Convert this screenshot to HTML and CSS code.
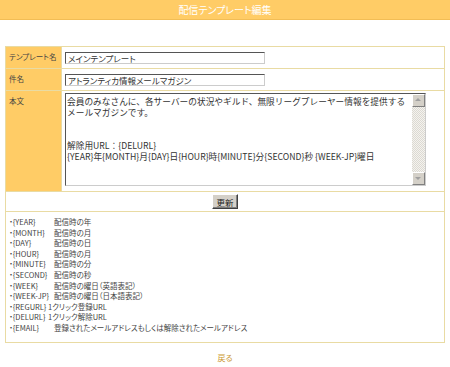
FILE: index.html
```html
<!DOCTYPE html>
<html lang="ja">

<head>
    <meta charset="UTF-8">
    <meta name="viewport" content="width=device-width, initial-scale=1.0">
    <title>配信テンプレート編集</title>
    <link rel="stylesheet" href="styles.css">
</head>

<body>
    <div class="pageTitle">配信テンプレート編集</div>

    <form id="templateForm">
        <table class="editTable">
            <tr>
                <th>テンプレート名</th>
                <td><input type="text" class="field" name="name" value="メインテンプレート"></td>
            </tr>
            <tr>
                <th>件名</th>
                <td><input type="text" class="field" name="subject" value="アトランティカ情報メールマガジン"></td>
            </tr>
            <tr>
                <th>本文</th>
                <td class="bodyCell">
                    <div class="bodyBox">
                        <textarea name="body">会員のみなさんに、各サーバーの状況やギルド、無限リーグプレーヤー情報を提供するメールマガジンです。


解除用URL：{DELURL}
{YEAR}年{MONTH}月{DAY}日{HOUR}時{MINUTE}分{SECOND}秒 {WEEK-JP}曜日</textarea>
                        <div class="scrollbar">
                            <span class="arrow up"></span>
                            <span class="track"></span>
                            <span class="arrow down"></span>
                        </div>
                    </div>
                </td>
            </tr>
            <tr>
                <td colspan="2" class="actions"><button type="submit">更新</button></td>
            </tr>
            <tr>
                <td colspan="2" class="varList">
                    <ul>
                        <li><span class="key">・{YEAR}</span>配信時の年</li>
                        <li><span class="key">・{MONTH}</span>配信時の月</li>
                        <li><span class="key">・{DAY}</span>配信時の日</li>
                        <li><span class="key">・{HOUR}</span>配信時の月</li>
                        <li><span class="key">・{MINUTE}</span>配信時の分</li>
                        <li><span class="key">・{SECOND}</span>配信時の秒</li>
                        <li><span class="key">・{WEEK}</span>配信時の曜日（英語表記）</li>
                        <li><span class="key">・{WEEK-JP}</span>配信時の曜日（日本語表記）</li>
                        <li><span class="key short">・{REGURL}</span>1クリック登録URL</li>
                        <li><span class="key short">・{DELURL}</span>1クリック解除URL</li>
                        <li><span class="key">・{EMAIL}</span>登録されたメールアドレスもしくは解除されたメールアドレス</li>
                    </ul>
                </td>
            </tr>
        </table>
    </form>

    <div class="footer"><a href="#">戻る</a></div>

    <script>
        document.getElementById('templateForm').addEventListener('submit', function (event) {
            event.preventDefault();
        });
    </script>
</body>

</html>
```

FILE: styles.css
```css
body {
    margin: 0;
    font-family: "Noto Sans CJK JP", "Noto Sans", sans-serif;
    font-feature-settings: "palt";
    color: #333;
    background-color: #fff;
    overflow: hidden;
}

.pageTitle {
    height: 19px;
    line-height: 19px;
    background-color: #ffcc66;
    border-bottom: 1px solid #f2bd55;
    color: #fff;
    font-size: 10px;
    text-align: center;
}

.editTable {
    width: 440px;
    margin: 26px 5px 0;
    border-collapse: collapse;
    border: 1px solid #e9dba3;
}

.editTable th,
.editTable td {
    border: 1px solid #e9dba3;
    padding: 5px 3px 4px;
    vertical-align: top;
    text-align: left;
}

.editTable th {
    width: 49px;
    background-color: #ffcc66;
    font-weight: normal;
    font-size: 7.5px;
    line-height: 10px;
    white-space: nowrap;
    color: #444;
}

.field {
    display: block;
    width: 200px;
    height: 12px;
    padding: 0 2px;
    box-sizing: border-box;
    border: 1px solid;
    border-color: #555 #ccc #ccc #555;
    font-family: inherit;
    font-feature-settings: "palt";
    font-size: 8.5px;
    line-height: 10px;
    color: #333;
}

.bodyCell {
    padding: 2px 3px 5px !important;
}

.bodyBox {
    display: flex;
    width: 361px;
    height: 93px;
    box-sizing: border-box;
    border: 1px solid;
    border-color: #555 #ccc #ccc #555;
    background-color: #fff;
}

.bodyBox textarea {
    flex: 1;
    min-width: 0;
    margin: 0;
    padding: 2px 1px 0;
    border: none;
    outline: none;
    resize: none;
    overflow: hidden;
    font-family: "Noto Sans CJK JP", sans-serif;
    font-feature-settings: normal;
    font-size: 8.7px;
    line-height: 11px;
    color: #333;
}

.scrollbar {
    display: flex;
    flex-direction: column;
    width: 13px;
    flex-shrink: 0;
    background-color: #ebe8e2;
    background-image: repeating-conic-gradient(#f4f3ef 0 25%, #dcd9d2 0 50%);
    background-size: 2px 2px;
}

.scrollbar .track {
    flex: 1;
}

.scrollbar .arrow {
    position: relative;
    height: 13px;
    box-sizing: border-box;
    background-color: #d4d0c8;
    border: 1px solid;
    border-color: #fff #808080 #808080 #fff;
}

.scrollbar .arrow::after {
    content: "";
    position: absolute;
    left: 2px;
    border-left: 3px solid transparent;
    border-right: 3px solid transparent;
}

.scrollbar .arrow.up::after {
    top: 3px;
    border-bottom: 3px solid #a0a0a0;
}

.scrollbar .arrow.down::after {
    top: 4px;
    border-top: 3px solid #a0a0a0;
}

.actions {
    padding: 2px !important;
}

.actions button {
    display: block;
    height: 15px;
    margin: 0 auto;
    padding: 0 3px;
    background-color: #d4d0c8;
    border: 1px solid;
    border-color: #fff #404040 #404040 #fff;
    box-shadow: inset -1px -1px 0 #808080;
    font-family: inherit;
    font-size: 8.5px;
    line-height: 12px;
    color: #222;
    cursor: pointer;
}

.varList {
    padding: 5px 3px 8px !important;
}

.varList ul {
    margin: 0;
    padding: 0;
    list-style: none;
    font-size: 7.5px;
    line-height: 10.6px;
    color: #444;
}

.varList li {
    display: flex;
    white-space: nowrap;
}

.varList .key {
    width: 45px;
    flex-shrink: 0;
}

.varList .key.short {
    width: 39px;
}

.footer {
    margin-top: 10px;
    line-height: 10px;
    text-align: center;
    font-size: 8px;
}

.footer a {
    color: #cc9933;
    text-decoration: none;
}
```
